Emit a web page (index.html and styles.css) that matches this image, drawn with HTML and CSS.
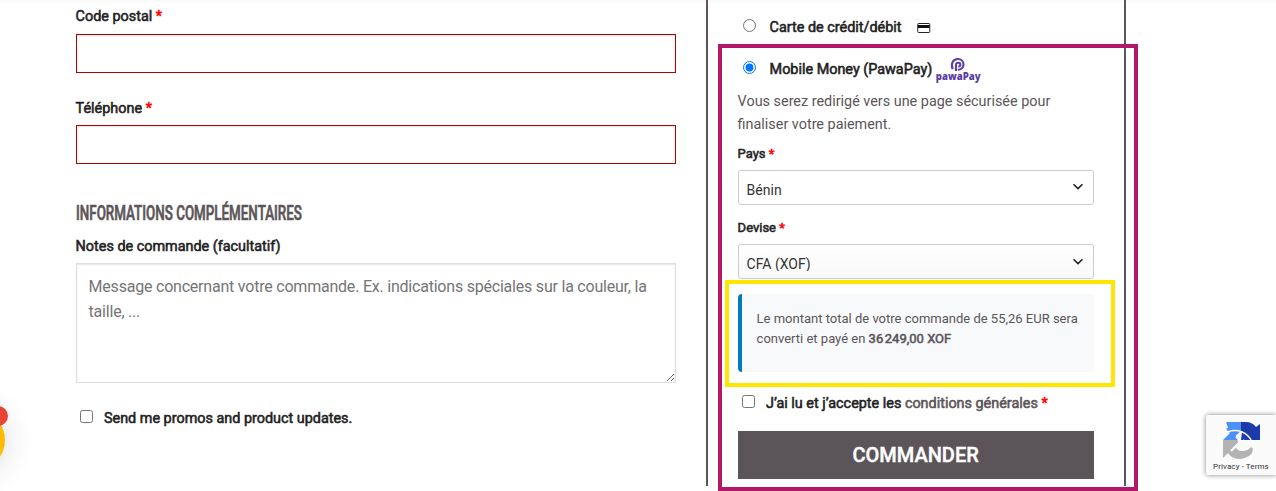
FILE: index.html
```
<!DOCTYPE html>
<html lang="fr">
<head>
<meta charset="utf-8">
<title>Commande</title>
<link rel="stylesheet" href="styles.css">
</head>
<body>
<main class="checkout">
  <section class="billing">
    <label class="label label-postal"><span>Code postal</span> <span class="req">*</span></label>
    <input class="field" type="text">
    <label class="label label-phone"><span>Téléphone</span> <span class="req">*</span></label>
    <input class="field" type="text">
    <h3 class="heading"><span class="heading-text">Informations complémentaires</span></h3>
    <label class="label label-notes"><span>Notes de commande (facultatif)</span></label>
    <textarea class="notes" placeholder="Message concernant votre commande. Ex. indications spéciales sur la couleur, la taille, ..."></textarea>
    <label class="promo"><input class="box" type="checkbox"><span>Send me promos and product updates.</span></label>
  </section>

  <section class="payment">
    <label class="method method-card"><input class="radio" type="radio" name="pay"><span>Carte de crédit/débit</span>
      <svg class="card-icon" width="14" height="10" viewBox="0 0 14 10"><rect x=".75" y=".5" width="12" height="9" rx=".8" fill="#fff" stroke="#222"/><path d="M1 2h11.5v3H1z" fill="#111"/></svg>
    </label>
    <label class="method method-mobile"><input class="radio" type="radio" name="pay" checked><span>Mobile Money (PawaPay)</span>
      <svg class="pawa" width="48" height="30" viewBox="0 0 48 30"><g fill="none" stroke="#5d3fa3" stroke-width="2.1"><path d="M17.700 13.200C15.600 8 17.800 3 22.800 3c7.600 0 7.600 10.800 0 10.800"/><path d="M21 15V9c0-3 4.400-3 4.400-.4 0 1.400-1 1.900-2.200 1.900"/></g><text class="pawa-text" x=".8" y="24" textLength="44.700" lengthAdjust="spacingAndGlyphs">pawaPay</text></svg>
    </label>
    <p class="desc">Vous serez redirigé vers une page sécurisée pour<br>finaliser votre paiement.</p>
    <label class="small-label label-country"><span>Pays</span> <span class="req">*</span></label>
    <div class="select"><span>Bénin</span><svg class="chevron" width="12" height="8" viewBox="0 0 12 8"><path d="M1.500 1.200 6 5.600l4.500-4.400"/></svg></div>
    <label class="small-label label-currency"><span>Devise</span> <span class="req">*</span></label>
    <div class="select select-shaded"><span class="clipped">CFA (XOF)</span><svg class="chevron chevron-low" width="12" height="8" viewBox="0 0 12 8"><path d="M1.500 1.200 6 5.600l4.500-4.400"/></svg></div>
    <div class="total">Le montant total de votre commande de 55,26 EUR sera<br>converti et payé en <b class="amount">36&#8239;249,00 XOF</b></div>
    <label class="terms"><input class="box" type="checkbox"><span>J’ai lu et j’accepte les <a class="link">conditions générales</a> <span class="req">*</span></span></label>
    <button class="order">COMMANDER</button>
  </section>
</main>

<div class="frame frame-method"></div>
<div class="frame frame-total"></div>
<div class="bubble"></div>
<div class="bubble-badge"></div>
<aside class="captcha">
  <svg class="captcha-logo" width="50" height="50" viewBox="0 0 50 50">
    <path fill="#4a90f5" d="M24 4v18H6l7-7-4-4 2-1-2-6z"/>
    <path fill="#1c3aa9" d="M24 4h5q6 0 10 5l4-3v16H24z"/>
    <path fill="#b3b3b3" d="M6 22h18l-6 6q2 5 7 5 6 0 9-4l3 2q-2 6-7 8-8 4-15 0-3-2-4-4l-5 5z"/>
    <g stroke="#fff" fill="none"><circle cx="18" cy="31" r="18.500" stroke-width="1.500"/><path stroke-width="2" d="m14 33 9-9M19 20l5-6M26 22l6 5"/></g>
    <path fill="#fafafa" d="m19 17 6-3-1 8 5 2-1 5-7-5z"/>
  </svg>
  <span class="captcha-text">Privacy - Terms</span>
</aside>
</body>
</html>
```
FILE: styles.css
```
* { box-sizing: border-box; }
body {
  margin: 0;
  height: 491px;
  overflow: hidden;
  background: linear-gradient(#f9f9f9, #fff 5px) no-repeat #fff;
  background-size: 100% 6px;
  font-family: Roboto, "Noto Sans", sans-serif;
  font-size: 14.4px;
  color: #222;
}
.checkout { display: flex; align-items: flex-start; gap: 30px; padding-left: 75.6px; }
.billing { width: 600px; display: flex; flex-direction: column; padding-top: 5px; }
.label, .promo, .method, .terms, .small-label { -webkit-text-stroke: .55px currentColor; white-space: nowrap; }
.label { height: 29px; line-height: 23px; }
.label-phone { height: 28px; margin-top: 24px; }
.req { color: #f00; }
.field {
  display: block; width: 600px; height: 39px; margin: 0; padding: 0 12px;
  border: 1px solid #b20000; border-radius: 0; outline: 0; background: #fff;
  box-shadow: inset 0 1px 2px rgba(0,0,0,.1);
}
.heading { margin: 38px 0 0; height: 33px; line-height: 22px; font-size: 17.6px; color: #5b5559; text-transform: uppercase; }
.heading-text { display: inline-block; transform-origin: 0 50%; transform: scale(.76, 1.12); font-weight: 500; white-space: nowrap; -webkit-text-stroke: .6px currentColor; }
.label-notes { height: 28px; }
.notes {
  display: block; width: 600px; height: 120px; margin: 0; padding: 10px 12px;
  border: 1px solid #ddd; box-shadow: inset 0 1px 2px rgba(0,0,0,.1);
  font: 16px/25px Roboto, sans-serif; letter-spacing: -.215px; outline: 0; resize: vertical; background: #fff;
}
.notes::placeholder { color: #757575; }
.promo { display: flex; align-items: flex-start; height: 24px; margin-top: 24px; line-height: 24px; }
.box { width: 13px; height: 13px; margin: 3px 11.4px 0 4px; }
.radio { width: 13px; height: 13px; margin: 5px 14px 0 5px; }

.payment {
  width: 420px; height: 486px; padding: 14px 30px 0;
  border: solid #5b5559; border-width: 0 2px;
  display: flex; flex-direction: column;
}
.method { display: flex; align-items: flex-start; height: 42px; line-height: 28px; }
.card-icon { margin: 9px 0 0 15.5px; }
.pawa { margin-left: 3px; }
.pawa-text { font: 800 10px "Open Sans", sans-serif; fill: #5d3fa3; }
.method-mobile { height: 34px; }
.desc { margin: 0; line-height: 23px; color: #5b5559; white-space: nowrap; }
.small-label { line-height: 22px; font-size: 13px; }
.label-country { height: 27px; margin-top: 7px; }
.label-currency { height: 27px; margin-top: 12px; }
.select {
  display: flex; justify-content: space-between; align-items: flex-start; height: 35px; padding: 8px 9px 0 8px;
  border: 1px solid #ccc; border-radius: 3px; background: #fff;
  font-size: 14px; line-height: 23px; color: #333; flex: none;
}
.clipped { height: 18px; overflow: hidden; }
.select-shaded { background: linear-gradient(#fff, #f8f8f8); }
.chevron { margin-top: 4px; fill: none; stroke: #222; stroke-width: 1.6; }
.chevron-low { margin-top: 5px; }
.total {
  flex: none; height: 78px; margin-top: 15px; padding: 15px 15px 0;
  border-left: 4px solid #007cba; border-radius: 4px; background: #f8f9fb;
  font-size: 13px; line-height: 20px; color: #5b5559; white-space: nowrap;
}
.amount { font-weight: 400; -webkit-text-stroke: .55px currentColor; }
.terms { display: flex; height: 39px; margin-top: 20px; line-height: 24px; }
.link { color: #5b5559; }
.order {
  flex: none; height: 48px; border: 0; padding: 0; background: #5b5559; color: #fff;
  font: 500 20px/47px Roboto, sans-serif; -webkit-text-stroke: .4px #fff;
}

.frame { position: absolute; pointer-events: none; }
.frame-method { left: 718px; top: 44px; width: 420px; height: 447px; border: 4px solid #b41669; }
.frame-total { left: 725px; top: 280px; width: 390px; height: 107px; border: 4px solid #ffe600; }
.bubble {
  position: absolute; left: -55px; top: 410px; width: 60px; height: 60px; border-radius: 50%;
  background: #fdbb04; box-shadow: 0 1px 32px rgba(0,0,0,.16);
}
.bubble-badge { position: absolute; left: -12px; top: 406px; width: 20px; height: 20px; border-radius: 50%; background: #ea4335; }
.captcha {
  position: absolute; left: 1206px; top: 415px; width: 70px; height: 60px;
  border-radius: 2px 0 0 2px; background: #fafafa; box-shadow: 0 0 5px #808080;
}
.captcha-logo { position: absolute; left: 11px; top: 3px; }
.captcha-text { position: absolute; left: 7px; top: 47px; font-size: 8px; line-height: 10px; letter-spacing: .1px; color: #333; white-space: nowrap; }
```
